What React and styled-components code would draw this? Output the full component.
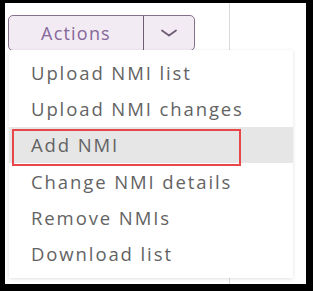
import React from 'react';
import styled, { createGlobalStyle } from 'styled-components';

const GlobalStyle = createGlobalStyle`
  html, body {
    margin: 0;
    padding: 0;
    background: #000;
  }
  * {
    box-sizing: border-box;
  }
`;

const Frame = styled.div`
  width: 313px;
  height: 291px;
  border-style: solid;
  border-color: #000;
  border-width: 3px 7px 7px 5px;
  background: #fff;
  font-family: 'Open Sans', 'Noto Sans', sans-serif;
  overflow: hidden;
`;

const Canvas = styled.div`
  position: relative;
  height: 100%;
  display: grid;
  grid-template-columns: 225px 1fr;
`;

const LeftPane = styled.div`
  border-right: 1px solid #d9d9d9;
  padding: 12px 0 0 3px;
`;

const SplitButton = styled.div`
  display: flex;
  width: 187px;
  height: 36px;
  border: 1px solid #85708c;
  border-radius: 5px;
  background: #f2ebf3;
  overflow: hidden;
`;

const MainPart = styled.button`
  width: 135px;
  border: none;
  border-right: 1px solid #6f5c75;
  background: transparent;
  color: #86679a;
  font-family: inherit;
  font-size: 18px;
  letter-spacing: 1.2px;
  padding: 0;
`;

const ChevronPart = styled.button`
  flex: 1;
  border: none;
  background: transparent;
  display: flex;
  align-items: center;
  justify-content: center;
  padding: 0;
`;

const Menu = styled.ul`
  position: absolute;
  left: 4px;
  top: 47px;
  width: 284px;
  margin: 0;
  padding: 4px 0 6px;
  list-style: none;
  background: #fff;
  box-shadow: 0 1px 4px rgba(0, 0, 0, 0.12);
`;

const Item = styled.li`
  position: relative;
  height: 36.3px;
  display: flex;
  align-items: center;
  padding-left: 22px;
  font-size: 18.5px;
  letter-spacing: 1.9px;
  color: #636363;
  background: ${(p) => (p.active ? '#e6e6e6' : 'transparent')};
`;

const Highlight = styled.span`
  position: absolute;
  left: 3px;
  top: 2px;
  width: 229px;
  height: 37px;
  border: 2px solid #e8474a;
`;

const items = [
  'Upload NMI list',
  'Upload NMI changes',
  'Add NMI',
  'Change NMI details',
  'Remove NMIs',
  'Download list',
];

export default function App() {
  return (
    <>
      <GlobalStyle />
      <Frame>
        <Canvas>
          <LeftPane>
            <SplitButton>
              <MainPart>Actions</MainPart>
              <ChevronPart>
                <svg width="18" height="10" viewBox="0 0 18 10">
                  <path d="M2 2.5 L9 7.5 L16 2.5" fill="none" stroke="#6f5c75" strokeWidth="1.8" strokeLinecap="round" strokeLinejoin="round" />
                </svg>
              </ChevronPart>
            </SplitButton>
          </LeftPane>
          <div />
          <Menu>
            {items.map((label) => (
              <Item key={label} active={label === 'Add NMI'}>
                {label}
                {label === 'Add NMI' && <Highlight />}
              </Item>
            ))}
          </Menu>
        </Canvas>
      </Frame>
    </>
  );
}
